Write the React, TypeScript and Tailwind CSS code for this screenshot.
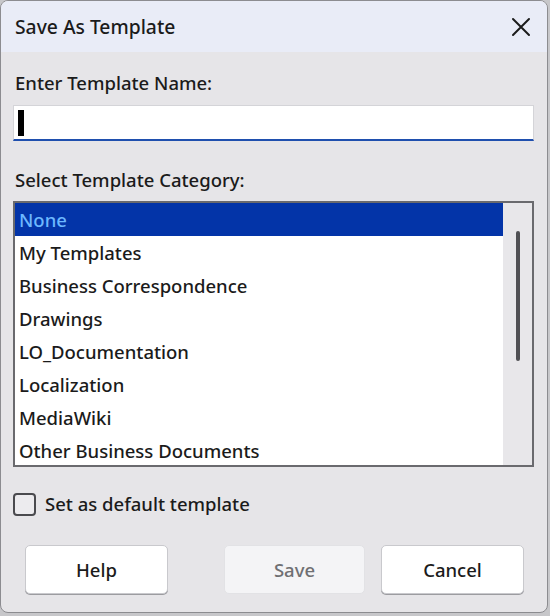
import React, { useState } from 'react';

const categories = [
  'None',
  'My Templates',
  'Business Correspondence',
  'Drawings',
  'LO_Documentation',
  'Localization',
  'MediaWiki',
  'Other Business Documents',
];

export default function App() {
  const [selected, setSelected] = useState(0);
  const [isDefault, setIsDefault] = useState(false);

  return (
    <div className="w-[550px] h-[616px] bg-[#c7c7ca] font-['Noto_Sans',sans-serif] text-[#1b1b1b] overflow-hidden">
      <div className="w-[548px] h-[613px] rounded-[8px] border border-[#8c8c90] bg-[#e6e5e8] flex flex-col overflow-hidden">
        {/* title bar */}
        <div className="h-[51px] shrink-0 bg-[#e9ecf7] flex items-center justify-between pl-[14px] pr-[16px]">
          <span className="text-[19.3px] leading-none font-medium">Save As Template</span>
          <svg width="20" height="20" viewBox="0 0 20 20" className="text-[#1b1b1b]">
            <path d="M2 2 L18 18 M18 2 L2 18" stroke="currentColor" strokeWidth="2" strokeLinecap="round" />
          </svg>
        </div>

        <div className="flex flex-col px-[12px]">
          <label className="mt-[19px] h-[24px] text-[18.5px] leading-[24px] font-medium pl-[2px]">
            Enter Template Name:
          </label>
          <div className="mt-[10px] h-[36px] w-[521px] bg-white border border-[#d4d4d8] border-b-2 border-b-[#1f4fae] flex items-center pl-[4px]">
            <div className="w-[6px] h-[26px] bg-black" />
          </div>

          <label className="mt-[27px] h-[24px] text-[18.5px] leading-[24px] font-medium pl-[2px]">
            Select Template Category:
          </label>
          <div className="mt-[9px] h-[266px] w-[521px] border-2 border-[#6a6a6e] bg-white flex">
            <div className="flex-1 flex flex-col">
              {categories.map((c, i) => (
                <div
                  key={c}
                  onClick={() => setSelected(i)}
                  className={`h-[33px] shrink-0 flex items-center pl-[4px] text-[18.5px] font-medium ${
                    selected === i ? 'bg-[#0334a8] text-[#6db8ff]' : 'text-[#1b1b1b]'
                  }`}
                >
                  {c}
                </div>
              ))}
            </div>
            <div className="w-[29px] bg-[#e8e7ea] flex justify-center pt-[28px]">
              <div className="w-[4px] h-[130px] rounded-full bg-[#505054]" />
            </div>
          </div>

          <label className="mt-[25px] flex items-center gap-[9px] cursor-pointer" onClick={() => setIsDefault(!isDefault)}>
            <span className="w-[23px] h-[23px] rounded-[4px] border-2 border-[#4a4a4e] bg-[#ecebee] flex items-center justify-center">
              {isDefault && (
                <svg width="14" height="14" viewBox="0 0 14 14">
                  <path d="M2 7 L6 11 L12 3" stroke="#1b1b1b" strokeWidth="2" fill="none" />
                </svg>
              )}
            </span>
            <span className="text-[18.5px] leading-[24px] font-medium">Set as default template</span>
          </label>

          <div className="mt-[29px] flex items-center pl-[12px]">
            <button className="w-[143px] h-[49px] rounded-[5px] bg-white border border-[#c9c9cd] shadow-[0_1px_0_#9c9ca0] text-[18.5px] font-medium">
              Help
            </button>
            <button className="ml-[56px] w-[141px] h-[49px] rounded-[5px] bg-[#f4f4f6] border border-[#e2e2e5] text-[18.5px] font-medium text-[#6f6f72]">
              Save
            </button>
            <button className="ml-[16px] w-[143px] h-[49px] rounded-[5px] bg-white border border-[#c9c9cd] shadow-[0_1px_0_#9c9ca0] text-[18.5px] font-medium">
              Cancel
            </button>
          </div>
        </div>
      </div>
    </div>
  );
}
